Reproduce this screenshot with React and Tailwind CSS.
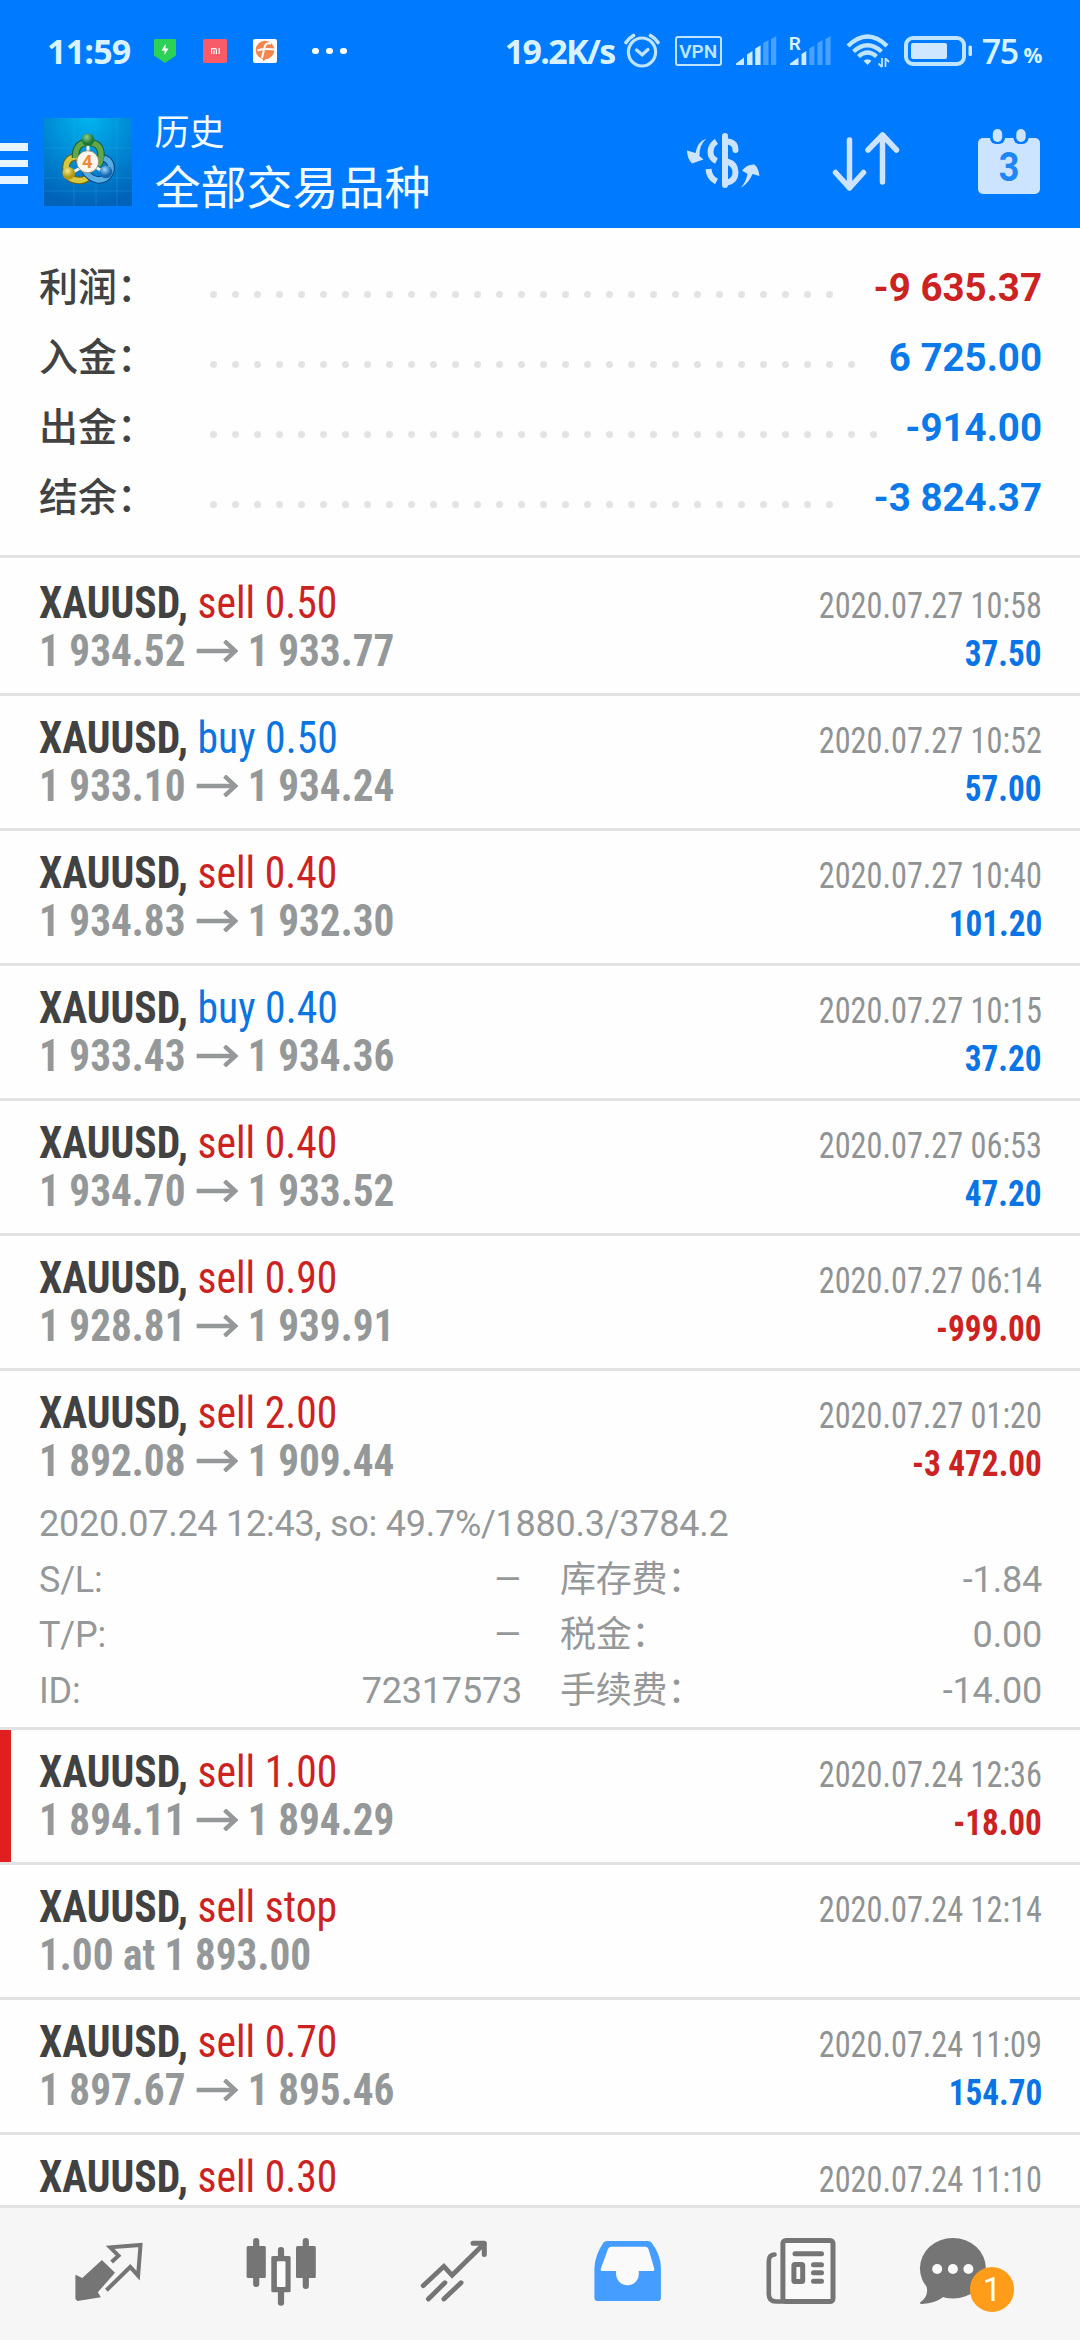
import React from 'react';
import clsx from 'clsx';

const totals = [
  { label: '利润：', value: '-9 635.37', loss: true },
  { label: '入金：', value: '6 725.00' },
  { label: '出金：', value: '-914.00' },
  { label: '结余：', value: '-3 824.37' },
];

const deals = [
  { id: 1, side: 'sell', volume: '0.50', from: '1 934.52', to: '1 933.77', time: '2020.07.27 10:58', profit: '37.50' },
  { id: 2, side: 'buy', volume: '0.50', from: '1 933.10', to: '1 934.24', time: '2020.07.27 10:52', profit: '57.00' },
  { id: 3, side: 'sell', volume: '0.40', from: '1 934.83', to: '1 932.30', time: '2020.07.27 10:40', profit: '101.20' },
  { id: 4, side: 'buy', volume: '0.40', from: '1 933.43', to: '1 934.36', time: '2020.07.27 10:15', profit: '37.20' },
  { id: 5, side: 'sell', volume: '0.40', from: '1 934.70', to: '1 933.52', time: '2020.07.27 06:53', profit: '47.20' },
  { id: 6, side: 'sell', volume: '0.90', from: '1 928.81', to: '1 939.91', time: '2020.07.27 06:14', profit: '-999.00' },
  {
    id: 7,
    side: 'sell',
    volume: '2.00',
    from: '1 892.08',
    to: '1 909.44',
    time: '2020.07.27 01:20',
    profit: '-3 472.00',
    details: {
      comment: '2020.07.24 12:43, so: 49.7%/1880.3/3784.2',
      rows: [
        ['S/L:', '–', '库存费：', '-1.84'],
        ['T/P:', '–', '税金：', '0.00'],
        ['ID:', '72317573', '手续费：', '-14.00'],
      ],
    },
  },
  { id: 8, side: 'sell', volume: '1.00', from: '1 894.11', to: '1 894.29', time: '2020.07.24 12:36', profit: '-18.00', marked: true },
  { id: 9, side: 'sell', volume: 'stop', note: '1.00 at 1 893.00', time: '2020.07.24 12:14' },
  { id: 10, side: 'sell', volume: '0.70', from: '1 897.67', to: '1 895.46', time: '2020.07.24 11:09', profit: '154.70' },
  { id: 11, side: 'sell', volume: '0.30', time: '2020.07.24 11:10' },
];

const condensed = "font-['Roboto_Condensed','Roboto','Noto_Sans_CJK_SC',sans-serif] [font-stretch:75%]";

const StatusBar = () => (
  <div className="flex h-[102px] items-center text-[#d9f2ff] font-['Open_Sans',sans-serif] font-bold">
    <span className="ml-[47px] w-[107px] text-[34px] leading-none tracking-[-0.8px]">11:59</span>
    <svg width="22" height="24" viewBox="0 0 22 24">
      <path d="M1 0H21Q22 0 22 1V16.5L11 24L0 16.5V1Q0 0 1 0Z" fill="#2bd255" />
      <path d="M11.500 5L7.500 11.500H10.500L10.500 16L14.500 9.500H11.500Z" fill="#fff" />
    </svg>
    <span className="ml-[27px] flex h-6 w-6 items-center justify-center rounded-[2px] bg-[#f75c68]">
      <svg width="9" height="6" viewBox="0 0 9 6" fill="none" stroke="#fff" strokeWidth="1.2">
        <path d="M.6 6V.6H4.2Q5.4.6 5.4 2V6M3 2.500V6M8.200 0V6" />
      </svg>
    </span>
    <svg className="ml-[26px]" width="24" height="24" viewBox="0 0 24 24">
      <rect width="24" height="24" rx="2" fill="#fff" />
      <circle cx="12" cy="11" r="9.300" fill="#f5854e" />
      <path d="M9 18L15 17L10.500 22.500Z" fill="#f5854e" />
      <path d="M18 4.500Q12.500 3 11.500 8.500L9 19M4.500 11.500Q11 9.300 21.500 10.500" fill="none" stroke="#fff" strokeWidth="2" />
    </svg>
    <div className="ml-[35px] flex gap-[7.5px]">
      <i className="size-[6.6px] rounded-full bg-white" />
      <i className="size-[6.6px] rounded-full bg-white" />
      <i className="size-[6.6px] rounded-full bg-white" />
    </div>
    <div className="ml-auto flex items-center pr-[37.5px]">
      <span className="w-[119px] text-[34px] leading-none tracking-[-1.7px]">19.2K/s</span>
      <svg width="36" height="36" viewBox="0 0 36 36" fill="none" stroke="#bfe4ff" strokeWidth="3.2" strokeLinecap="round">
        <ellipse cx="18" cy="19" rx="13.6" ry="14" />
        <path d="M12.500 17L18.200 21.800L24 16.500" />
        <path d="M2 9.500Q5 5 9.500 2.500M34 9.500Q31 5 26.500 2.500" strokeWidth="3.6" />
      </svg>
      <span className="ml-[15px] flex h-[30px] w-[47px] items-center justify-center rounded-[3px] border-[2.5px] border-[#bfe4ff] font-['Roboto',sans-serif] text-[19px] font-semibold leading-none text-[#bfe4ff]">
        VPN
      </span>
      <svg className="ml-[14px]" width="41" height="30" viewBox="0 0 41 30" fill="#cdeaff">
        <path d="M0 29V27.500L8 21.500V29ZM11 29V18.500L16.500 15V29ZM19.200 29V12.500L24.600 9.500V29Z" />
        <path d="M27.200 29V7L32.500 4V29ZM35 29V3L40.300 0V29Z" opacity=".35" />
      </svg>
      <span className="relative ml-[13px]">
        <svg width="41" height="30" viewBox="0 0 41 30" fill="#cdeaff">
          <path d="M0 29V27.500L8.500 21.500V29ZM11.500 29V18L16.300 15V29Z" />
          <path d="M19.300 29V12.500L24.400 9.500V29ZM27.400 29V7L32.500 4V29ZM35.500 29V3L40.600 0V29Z" opacity=".35" />
        </svg>
        <span className="absolute left-[-1px] top-[-2px] font-['Roboto',sans-serif] text-[19px] font-semibold leading-none">R</span>
      </span>
      <svg className="ml-[15px]" width="44" height="34" viewBox="0 0 44 34" fill="none" stroke="#bfe4ff">
        <path d="M2 12Q21.500 -7 41 12" strokeWidth="4.400" />
        <path d="M7.500 17.500Q21.500 5 35.500 17.500" strokeWidth="4.200" />
        <path d="M12.500 22.500Q21.500 14.500 30.500 22.500" strokeWidth="4.200" />
        <path d="M21.500 31L17.500 26.800Q21.500 23.500 25.500 26.800Z" fill="#cdeaff" stroke="none" />
        <path d="M36 24V33M32.500 29.500L36 33M39.500 33V24M39.500 24.500L43 28" strokeWidth="1.800" />
      </svg>
      <svg className="ml-[14px]" width="69" height="30" viewBox="0 0 69 30">
        <rect x="2" y="2" width="58" height="26" rx="7" fill="none" stroke="#bfe4ff" strokeWidth="4" />
        <rect x="7" y="7" width="36" height="16" rx="2" fill="#cfe7ff" />
        <rect x="64.500" y="9.500" width="3.500" height="10.500" rx="1.500" fill="#cfe7ff" />
      </svg>
      <span className="ml-[9px] text-[34px] font-semibold leading-none tracking-[-1.5px]">75</span>
      <span className="ml-[6px] pt-[9px] text-[21px] leading-none">%</span>
    </div>
  </div>
);

const AppLogo = () => (
  <svg className="ml-[16.500px] mt-[4px]" width="88" height="88" viewBox="0 0 88 88">
    <defs>
      <radialGradient id="sky" cx="50%" cy="0%" r="100%">
        <stop offset="0" stopColor="#00b4ee" />
        <stop offset=".55" stopColor="#0085d2" />
        <stop offset="1" stopColor="#0062b8" />
      </radialGradient>
      <radialGradient id="green" cx="40%" cy="30%">
        <stop offset="0" stopColor="#8fd08a" />
        <stop offset="1" stopColor="#1d7a35" />
      </radialGradient>
      <radialGradient id="gold" cx="40%" cy="30%">
        <stop offset="0" stopColor="#f5ec8a" />
        <stop offset="1" stopColor="#b39a14" />
      </radialGradient>
      <radialGradient id="blue" cx="40%" cy="30%">
        <stop offset="0" stopColor="#9fd8ff" />
        <stop offset="1" stopColor="#1568b4" />
      </radialGradient>
    </defs>
    <rect width="88" height="88" fill="url(#sky)" />
    <path d="M30 0V88M52 0V88M73 0V88M0 30H88M0 60H88M0 73H88" stroke="#3db4ee" strokeOpacity=".25" />
    <path d="M38 39Q23 37 22 49Q22 62 35 62.500Q40 62.500 43 60" fill="none" stroke="#6e6310" strokeWidth="7.500" />
    <path d="M38 39Q23 37 22 49Q22 62 35 62.500Q40 62.500 43 60" fill="none" stroke="#d8c840" strokeWidth="5.500" />
    <path d="M31.500 40Q31 24.500 44 24.500Q58 24.500 57 39Q57 44 54 47" fill="none" stroke="#1b5f2c" strokeWidth="7.500" />
    <path d="M31.500 40Q31 24.500 44 24.500Q58 24.500 57 39Q57 44 54 47" fill="none" stroke="#5fa84c" strokeWidth="5.500" />
    <path d="M60 40Q68 43 67 52Q64 62 54 62Q45 60 41 53" fill="none" stroke="#0d4785" strokeWidth="7.500" />
    <path d="M60 40Q68 43 67 52Q64 62 54 62Q45 60 41 53" fill="none" stroke="#58aee4" strokeWidth="5.500" />
    <path d="M44 26V42M29 54L40 48M58 53L48 47" stroke="#f2f5ea" strokeWidth="3" />
    <circle cx="44" cy="21.700" r="6.300" fill="url(#green)" />
    <circle cx="24.700" cy="55.300" r="6.300" fill="url(#gold)" />
    <circle cx="62" cy="54" r="6.300" fill="url(#blue)" />
    <circle cx="43.700" cy="43.700" r="11" fill="#fbf7ef" stroke="#8a8060" strokeWidth=".8" />
    <text x="43.300" y="50.300" textAnchor="middle" fill="#ee8a35" fontFamily="Roboto" fontWeight="bold" fontSize="18.500">
      4
    </text>
  </svg>
);

const TitleBar = () => (
  <div className="flex h-[120px] items-center pb-1">
    <div className="mt-[7px] flex w-[27.5px] flex-col gap-[9px]">
      <i className="h-[7.500px] bg-[#e6f4ff]" />
      <i className="h-[7.500px] bg-[#e6f4ff]" />
      <i className="h-[7.500px] bg-[#e6f4ff]" />
    </div>
    <AppLogo />
    <div className="ml-[22.500px] font-['Noto_Sans_CJK_SC',sans-serif] text-[#f2fbff]">
      <div className="text-[35px] leading-[50px]">历史</div>
      <div className="pb-px text-[46px] leading-[59px]">全部交易品种</div>
    </div>
    <div className="ml-auto mt-[2px] flex items-center pr-[40px] text-[#cce4ff]">
      <svg width="74" height="58" viewBox="0 0 74 58" fill="none" stroke="currentColor" strokeWidth="6">
        <path d="M39 4V53" strokeLinecap="round" />
        <path d="M30.500 9.500Q24.500 13 24.500 20Q24.500 26 30.500 29" />
        <path d="M22.500 37Q23 45.500 30.500 49.500" />
        <path d="M41 9.500Q49.500 10 49.500 18" strokeLinecap="round" />
        <path d="M41 29.500Q49.500 32 49.500 40.500Q49.500 49 41 50.500" />
        <path d="M19.500 7Q12 9 9.500 21L1 18.500Q1 26 6 31.500L17.500 27.500L13.500 24Q13 13 20 7Z" fill="currentColor" stroke="none" />
        <path d="M54.500 56Q63 51 66.500 42L73.500 44Q72.500 36 68.500 32.500Q61 32 56 38.500L61.500 42Q60 50 54.500 56Z" fill="currentColor" stroke="none" />
      </svg>
      <svg className="ml-[71px]" width="70" height="60" viewBox="0 0 70 60" fill="none" stroke="currentColor" strokeWidth="5.500" strokeLinecap="round" strokeLinejoin="round">
        <path d="M18.500 9V57M4.500 41.500L18.500 57L32.500 41.500" />
        <path d="M51.500 51V4M37 19L51.500 4L65.500 19" />
      </svg>
      <div className="relative ml-[77px] h-[66px] w-[62px]">
        <svg width="62" height="66" viewBox="0 0 62 66">
          <rect y="10" width="62" height="56" rx="5" fill="currentColor" />
          <rect x="12" y="-5" width="15" height="21" rx="6" fill="#007aff" />
          <rect x="35.500" y="-5" width="15" height="21" rx="6" fill="#007aff" />
          <rect x="14.800" y="1" width="9.400" height="13" rx="4.700" fill="currentColor" />
          <rect x="38.300" y="1" width="9.400" height="13" rx="4.700" fill="currentColor" />
        </svg>
        <span className="absolute inset-x-0 top-[20px] text-center font-['Roboto',sans-serif] text-[40px] font-bold leading-[40px] text-[#1f86f5] scale-x-[.9]">
          3
        </span>
      </div>
    </div>
  </div>
);

const Totals = () => (
  <div className="h-[330px] border-b-[3px] border-[#e2e2e2] pl-[39px] pr-[38px] pt-[23px]">
    {totals.map(({ label, value, loss }) => (
      <div key={label} className="flex h-[70px] items-center">
        <span className="w-[171px] pb-[4px] font-['Noto_Sans_CJK_SC',sans-serif] text-[39px] font-medium leading-[66px] text-[#424242]">
          {label}
        </span>
        {/* dots that do not fit wrap to a hidden line */}
        <div className="mr-[20px] mt-[17px] flex h-[7px] flex-1 flex-wrap gap-x-[15px] gap-y-5 overflow-hidden">
          {Array.from({ length: 34 }, (_, i) => (
            <i key={i} className="size-[7px] rounded-full bg-[#e3e3e3]" />
          ))}
        </div>
        <span
          className={clsx(
            "pt-[3px] font-['Roboto',sans-serif] text-[38.5px] font-bold leading-[67px]",
            loss ? 'text-[#cc2222]' : 'text-[#0a7aea]'
          )}
        >
          {value}
        </span>
      </div>
    ))}
  </div>
);

const PriceArrow = () => (
  <svg className="mb-[7px] ml-[11.500px] mr-[10px] inline-block" width="45" height="22" viewBox="0 0 45 22" fill="none" stroke="currentColor">
    <path d="M0 11H41" strokeWidth="4.500" />
    <path d="M30 1L41.500 11L30 21" strokeWidth="4.500" />
  </svg>
);

const DealDetails = ({ comment, rows }) => (
  <div className="mt-[12px] font-['Roboto','Noto_Sans_CJK_SC',sans-serif] text-[36px] leading-[55.500px] text-[#959899]">
    <div className="tracking-[-0.25px]">{comment}</div>
    {rows.map(([leftLabel, leftValue, rightLabel, rightValue]) => (
      <div key={leftLabel} className="flex h-[55.500px] tracking-[-0.2px]">
        <span>{leftLabel}</span>
        <span className={clsx('ml-auto', leftValue === '–' && 'origin-right scale-x-125')}>{leftValue}</span>
        <span className="ml-[38px] w-[250px]">{rightLabel}</span>
        <span className="w-[232px] text-right">{rightValue}</span>
      </div>
    ))}
  </div>
);

const DealRow = ({ deal, first }) => (
  <div
    className={clsx(
      'relative shrink-0 border-b-[3px] border-[#e2e2e2] pl-[39px] pr-[38px]',
      first ? 'h-[138px] pt-[21px]' : 'pt-[18px]',
      !first && (deal.details ? 'h-[359px]' : 'h-[135px]')
    )}
  >
    {deal.marked && <i className="absolute inset-y-0 left-0 w-[11px] bg-[#e01f1f]" />}
    <div className={condensed}>
      <div className="flex h-12 items-baseline justify-between text-[44px] leading-[48px]">
        <span className="origin-left scale-x-[.946]">
          <b className="text-[#424242]">XAUUSD,</b>{' '}
          <span className={deal.side === 'sell' ? 'text-[#cc2222]' : 'text-[#0a74e0]'}>
            {deal.side} {deal.volume}
          </span>
        </span>
        <span className="origin-right scale-x-[.872] text-[37px] text-[#909394]">{deal.time}</span>
      </div>
      <div className="flex h-12 items-baseline justify-between text-[44px] font-bold leading-[48px] text-[#959899]">
        <span className="origin-left scale-x-[.937]">
          {deal.note}
          {deal.from}
          {deal.from && <PriceArrow />}
          {deal.to}
        </span>
        {deal.profit && (
          <span
            className={clsx(
              'origin-right scale-x-[.897] text-[37px]',
              deal.profit.startsWith('-') ? 'text-[#cc2222]' : 'text-[#0a74e6]'
            )}
          >
            {deal.profit}
          </span>
        )}
      </div>
    </div>
    {deal.details && <DealDetails {...deal.details} />}
  </div>
);

const navIcons = [
  <g key="quotes">
    <path d="M27.400 45.700L34.300 49L53.900 31L67 43.700L49.800 63.300L52.900 68.300L29.500 72L27.400 70Z" fill="#757575" />
    <path d="M63.600 33L70.500 26.700L62.200 18.300L92.500 16L90.100 46.700L82.200 38L58.400 61.300" fill="none" stroke="#757575" strokeWidth="4" />
  </g>,
  <g key="chart" fill="#757575">
    <rect x="32.100" y="9" width="6.200" height="49" rx="3" />
    <rect x="25.600" y="17" width="19.200" height="32" rx="1.500" />
    <rect x="81.700" y="9" width="6.200" height="51" rx="3" />
    <rect x="75" y="17" width="19.800" height="32" rx="1.500" />
    <rect x="56.900" y="18" width="6.200" height="58.700" rx="3" />
    <rect x="50.300" y="27" width="19.300" height="36.300" rx="1.500" />
    <rect x="55.900" y="32.300" width="8.600" height="25.700" rx="1" fill="#fafafa" />
  </g>,
  <g key="trade" fill="none" stroke="#757575" strokeWidth="4.800">
    <path d="M29.200 56.700L49.900 37.300L58.100 46.300L89.800 15" strokeLinecap="round" />
    <path d="M79 14.200H90.300V25.500" strokeWidth="5" strokeLinecap="round" strokeLinejoin="round" />
    <path d="M34.400 70L50.900 53.700M49.900 70L67.100 53.700" strokeLinecap="round" />
  </g>,
  <g key="history">
    <path
      d="M40 12H81Q83.500 12 84.500 13.500Q93.900 26 93.900 39V69Q93.900 72 91 72H30.500Q27.400 72 27.400 69V39Q28 26 36.500 13.500Q37.500 12 40 12Z"
      fill="#459dff"
    />
    <path
      d="M44.500 17.700H78Q80.600 17.700 81.500 20L87.300 39.500Q87.800 42 86 42H71.800V45A11.350 11.350 0 0 1 49.100 45V42H35Q33.200 42 33.900 39.500L41 20Q41.900 17.700 44.500 17.700Z"
      fill="#fafafa"
    />
  </g>,
  <g key="news" fill="none" stroke="#757575" strokeWidth="5" strokeLinecap="round">
    <rect x="42.900" y="11.500" width="50.100" height="61" rx="3" fill="#fafafa" />
    <path d="M34.500 25.500Q28.800 26 28.800 32V65Q28.800 72.500 36 72.500H45" strokeWidth="4.600" />
    <path d="M55 24.700H81.500M73.500 35.700H81.500M73.500 43.700H81.500M73.500 52.300H81.500" />
    <rect x="53.900" y="35.500" width="8.800" height="17" rx="1" />
  </g>,
  <g key="chat">
    <ellipse cx="39.900" cy="39.300" rx="33" ry="30.300" fill="#757575" />
    <path d="M12 53Q18 66 7 73.500Q6.500 75 9 75Q22 74.500 31 67.500Z" fill="#757575" />
    <circle cx="24.200" cy="40" r="5" fill="#fafafa" />
    <circle cx="39.900" cy="40" r="5" fill="#fafafa" />
    <circle cx="55.400" cy="40" r="5" fill="#fafafa" />
  </g>,
];

const BottomNav = () => (
  <nav className="flex h-[135px] shrink-0 items-center border-t-[3px] border-[#e3e3e3] bg-[#f6f6f6] px-[21px]">
    {navIcons.map((icon) => (
      <div key={icon.key} className="relative flex w-[173px] justify-center">
        <svg width="120" height="90" viewBox="0 0 120 90">
          {icon}
        </svg>
        {icon.key === 'chat' && (
          <span className="absolute left-[84px] top-[38px] flex h-[45px] w-[44px] items-center justify-center rounded-full bg-[#ff9c1a] font-['Roboto',sans-serif] text-[33px] leading-none text-white">
            1
          </span>
        )}
      </div>
    ))}
  </nav>
);

export default function App() {
  return (
    <div className="flex h-[2340px] w-[1080px] flex-col overflow-hidden bg-[#fefefe]">
      <header className="h-[228px] shrink-0 overflow-hidden bg-[#007aff]">
        <StatusBar />
        <TitleBar />
      </header>
      <Totals />
      <main className="flex min-h-0 flex-1 flex-col overflow-hidden">
        {deals.map((deal, i) => (
          <DealRow key={deal.id} deal={deal} first={i === 0} />
        ))}
      </main>
      <BottomNav />
    </div>
  );
}
